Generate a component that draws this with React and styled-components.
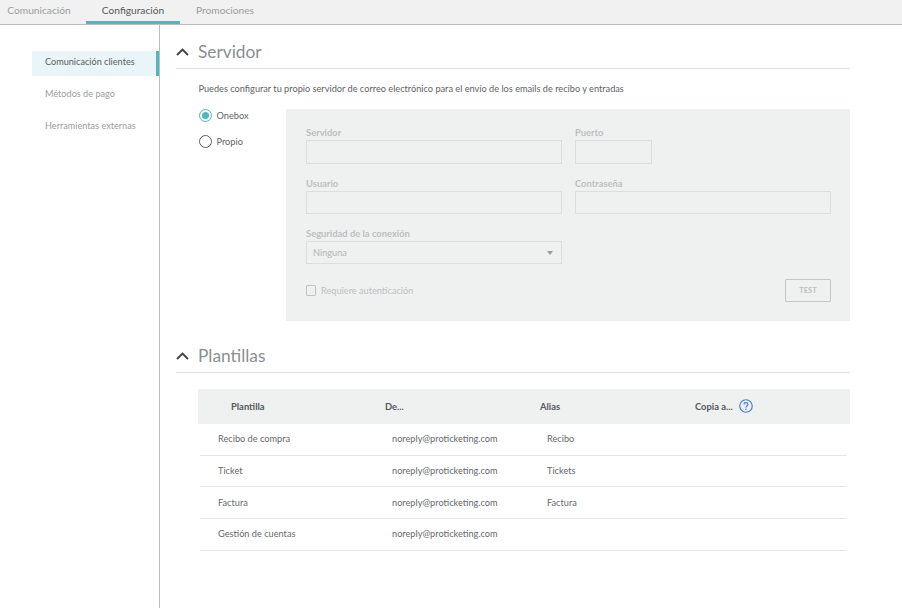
import React from "react";
import styled, { createGlobalStyle } from "styled-components";

const Global = createGlobalStyle`
  html, body { margin: 0; padding: 0; background: #fff; }
  body { font-family: "Lato", "Noto Sans", sans-serif; color: #5f6368; }
  * { box-sizing: border-box; }
`;
const Page = styled.div`width: 902px; height: 608px; display: flex; flex-direction: column; overflow: hidden;`;
const TabBar = styled.div`height: 25px; flex: none; display: flex; background: #f1f1f1; border-bottom: 1px solid #bdbdbd;`;
const Tab = styled.div`
  height: 24px; width: ${p => p.$w}px; margin-left: ${p => p.$ml || 0}px;
  display: flex; justify-content: center; padding-top: 4px;
  font-size: 10.2px; line-height: 13px;
  color: ${p => p.$active ? "#55595c" : "#9b9e9f"};
  border-bottom: 3px solid ${p => p.$active ? "#4fb8bd" : "transparent"};
`;
const Body = styled.div`flex: 1; display: flex; min-height: 0;`;
const Side = styled.nav`width: 160px; flex: none; border-right: 1px solid #bdbdbd; padding: 26px 0 0 32px; display: flex; flex-direction: column;`;
const SideItem = styled.div`
  height: ${p => p.$h}px; padding-left: 13px; padding-top: ${p => p.$pt}px;
  font-size: 9.15px; line-height: 12px;
  color: ${p => p.$active ? "#5a5e60" : "#9a9d9f"};
  background: ${p => p.$active ? "#e9f5f7" : "transparent"};
  border-right: 3px solid ${p => p.$active ? "#4fb8bd" : "transparent"};
`;
const Main = styled.main`width: 674px; margin-left: 16px; padding-top: 16px;`;
const SectionHead = styled.div`height: 28px; display: flex; align-items: center; gap: 9px; border-bottom: 1px solid #dfdfdf; padding-bottom: 5px;`;
const Chevron = () => (
  <svg width="13" height="8" viewBox="0 0 13 8" fill="none" stroke="#3f4143" strokeWidth="1.9"><path d="M1 7l5.5-5.5L12 7" /></svg>
);
const Title = styled.h2`margin: 0; font-size: 17.3px; line-height: 22px; font-weight: 400; color: #8b8f92;`;
const Intro = styled.p`margin: 14px 0 0 22.5px; font-size: 9.2px; line-height: 12px; color: #5f6366;`;
const ServerRow = styled.div`display: flex; margin-top: 14px;`;
const RadioCol = styled.div`width: 110px; padding: 0 0 0 22.5px; display: flex; flex-direction: column; gap: 13px;`;
const RadioRow = styled.label`display: flex; align-items: center; gap: 5px; font-size: 9.2px; height: 13px; color: #606467;`;
const Radio = styled.span`
  width: 13px; height: 13px; border-radius: 50%; flex: none;
  display: flex; align-items: center; justify-content: center;
  border: 1px solid ${p => p.$on ? "#4fb8bd" : "#5d5d5d"};
  &::after { content: ""; width: 7px; height: 7px; border-radius: 50%; background: ${p => p.$on ? "#4fb8bd" : "transparent"}; }
`;
const Panel = styled.div`
  width: 564px; height: 212px; background: #eff0f0; padding: 18px 19px 0 20px;
  display: grid; grid-template-columns: 256px 1fr; column-gap: 13px; grid-auto-rows: min-content;
`;
const Field = styled.div`display: flex; flex-direction: column; height: ${p => p.$h || 50.5}px;`;
const Label = styled.label`font-size: 9.4px; line-height: 12px; font-weight: 700; color: #bdbfc0; margin-bottom: 1px; height: 12px;`;
const Input = styled.div`
  height: 23.5px; width: ${p => p.$w ? p.$w + "px" : "100%"};
  border: 1px solid #dcdddd; background: #eff0f0;
`;
const Select = styled(Input)`
  display: flex; align-items: center; justify-content: space-between; padding: 0 8px 0 6px;
  font-size: 9.2px; color: #b4b6b7;
  &::after { content: ""; border: 3.5px solid transparent; border-top: 4px solid #9a9c9d; border-bottom: 0; }
`;
const BottomRow = styled.div`grid-column: 1 / -1; display: flex; justify-content: space-between; align-items: flex-start; margin-top: 15px;`;
const CheckRow = styled.label`display: flex; align-items: center; gap: 5px; margin-top: 5px; font-size: 9.2px; color: #bdbfc0; height: 12px;`;
const Check = styled.span`width: 10px; height: 11px; border: 1px solid #c2c3c4; border-radius: 1px; display: block;`;
const TestBtn = styled.button`
  width: 46px; height: 23px; padding: 0; background: transparent; border: 1px solid #c4c5c5; border-radius: 1px;
  font: 700 7.5px "Lato", sans-serif; color: #bcbebf;
`;
const Section2 = styled.section`margin-top: 24px;`;
const Table = styled.div`margin: 16px 0 0 22px;`;
const THead = styled.div`
  height: 35px; padding-bottom: 1px; background: #eff0f0; padding-left: 33px; display: grid; grid-template-columns: 154px 155px 155px 1fr; align-items: center;
  font-size: 9.4px; font-weight: 700; color: #55595c;
`;
const HeadCell = styled.div`display: flex; align-items: center; gap: 6px;`;
const Row = styled.div`
  height: 31.7px; padding-bottom: 1px; margin: 0 3px 0 2px; padding-left: 18px; border-bottom: 1px solid #e6e6e6;
  display: grid; grid-template-columns: 174px 155px 1fr; align-items: center;
  font-size: 9.2px; color: #65696b;
`;
const Help = () => (
  <svg width="14" height="14" viewBox="0 0 13 13" fill="none">
    <circle cx="6.5" cy="6.5" r="5.8" stroke="#3f7fe0" strokeWidth="1.1" />
    <path d="M4.7 5.1c0-1 .8-1.7 1.8-1.7s1.8.7 1.8 1.6c0 1.4-1.8 1.3-1.8 2.8" stroke="#3f7fe0" strokeWidth="1.1" />
    <circle cx="6.5" cy="9.6" r=".7" fill="#3f7fe0" />
  </svg>
);

const rows = [
  ["Recibo de compra", "noreply@proticketing.com", "Recibo"],
  ["Ticket", "noreply@proticketing.com", "Tickets"],
  ["Factura", "noreply@proticketing.com", "Factura"],
  ["Gestión de cuentas", "noreply@proticketing.com", ""],
];

export default function App() {
  return (
    <Page>
      <Global />
      <TabBar>
        <Tab $w={78}>Comunicación</Tab>
        <Tab $w={94} $ml={8} $active>Configuración</Tab>
        <Tab $w={90}>Promociones</Tab>
      </TabBar>
      <Body>
        <Side>
          <SideItem $active $h={25} $pt={5}>Comunicación clientes</SideItem>
          <SideItem $h={32} $pt={12}>Métodos de pago</SideItem>
          <SideItem $h={32} $pt={12}>Herramientas externas</SideItem>
        </Side>
        <Main>
          <section>
            <SectionHead><Chevron /><Title>Servidor</Title></SectionHead>
            <Intro>Puedes configurar tu propio servidor de correo electrónico para el envío de los emails de recibo y entradas</Intro>
            <ServerRow>
              <RadioCol>
                <RadioRow><Radio $on />Onebox</RadioRow>
                <RadioRow><Radio />Propio</RadioRow>
              </RadioCol>
              <Panel>
                <Field><Label>Servidor</Label><Input /></Field>
                <Field><Label>Puerto</Label><Input $w={77} /></Field>
                <Field><Label>Usuario</Label><Input /></Field>
                <Field><Label>Contraseña</Label><Input /></Field>
                <Field $h={36}><Label>Seguridad de la conexión</Label><Select>Ninguna</Select></Field>
                <div />
                <BottomRow>
                  <CheckRow><Check />Requiere autenticación</CheckRow>
                  <TestBtn>TEST</TestBtn>
                </BottomRow>
              </Panel>
            </ServerRow>
          </section>
          <Section2>
            <SectionHead><Chevron /><Title>Plantillas</Title></SectionHead>
            <Table>
              <THead>
                <div>Plantilla</div>
                <div>De...</div>
                <div>Alias</div>
                <HeadCell>Copia a... <Help /></HeadCell>
              </THead>
              {rows.map(r => (
                <Row key={r[0]}><div>{r[0]}</div><div>{r[1]}</div><div>{r[2]}</div></Row>
              ))}
            </Table>
          </Section2>
        </Main>
      </Body>
    </Page>
  );
}
